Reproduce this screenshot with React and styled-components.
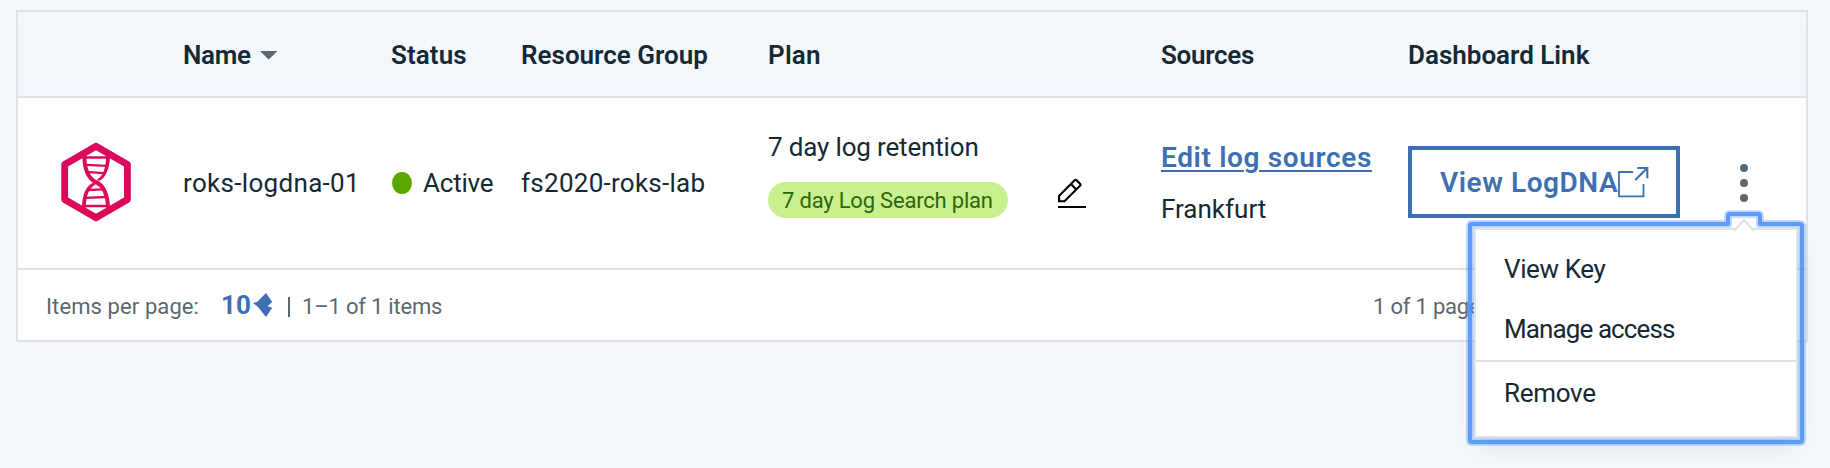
import React from "react";
import styled, { createGlobalStyle } from "styled-components";

const ink = "#152935";
const muted = "#5a6872";
const line = "#dfe3e6";
const blue = "#3d70b2";

const GlobalStyle = createGlobalStyle`
  * { box-sizing: border-box; }
  body {
    margin: 0;
    background: #f4f7fb;
    color: ${ink};
    font-family: Roboto, "Liberation Sans", sans-serif;
    font-size: 26px;
    line-height: 34px;
  }
`;

const Page = styled.main`
  height: 468px;
  padding: 10px 22px 0 16px;
  overflow: hidden;
`;

const Card = styled.section`
  border: 2px solid ${line};
  background: #fff;
`;

const Columns = styled.div`
  display: grid;
  grid-template-columns: 165px 208px 130px 247px 393px 247px 1fr;
  align-items: center;
`;

const HeaderRow = styled(Columns)`
  height: 86px;
  padding-top: 2px;
  background: linear-gradient(#f4f8fb, #f3f6fc);
  border-bottom: 2px solid ${line};
`;

const HeaderCell = styled.div`
  grid-column: ${(p) => p.$col};
  display: flex;
  align-items: center;
  gap: 9px;
  font-weight: 600;
  white-space: nowrap;
`;

const Label = styled.span`
  white-space: nowrap;
  letter-spacing: ${(p) => p.$track || 0}px;
`;

const ServiceRow = styled(Columns)`
  height: 172px;
  border-bottom: 2px solid ${line};
`;

const LogoCell = styled.div`
  padding-left: 42px;
  height: 80px;
  margin-top: -2px;
`;

const StatusCell = styled.div`
  display: flex;
  align-items: center;
  gap: 11px;
`;

const StatusDot = styled.span`
  width: 20px;
  height: 22px;
  margin-left: 1px;
  border-radius: 50%;
  background: #5aa700;
`;

const PlanCell = styled.div`
  display: flex;
  align-items: center;
  gap: 50px;
  align-self: start;
  padding-top: 32px;
`;

const PlanInfo = styled.div`
  width: 240px;
  display: flex;
  flex-direction: column;
  gap: 18px;
`;

const Tag = styled.span`
  height: 36px;
  padding: 1px 14px 0;
  border-radius: 18px;
  background: #c8f08f;
  color: #2d660a;
  font-size: 22px;
  line-height: 36px;
`;

const EditButton = styled.button`
  display: block;
  height: 30px;
  margin-top: 37px;
  padding: 0;
  border: 0;
  background: none;
`;

const SourcesCell = styled.div`
  display: flex;
  flex-direction: column;
  align-items: flex-start;
  gap: 17px;
`;

const SourcesLink = styled.a`
  color: ${blue};
  font-size: 28px;
  font-weight: 600;
  letter-spacing: 0.65px;
  white-space: nowrap;
  text-decoration: underline;
  text-decoration-thickness: 2px;
  text-underline-offset: 3px;
`;

const DashboardCell = styled.div`
  display: flex;
  align-items: center;
  gap: 60px;
`;

const DashboardButton = styled.button`
  display: flex;
  align-items: center;
  width: 272px;
  height: 72px;
  margin-top: -2px;
  padding: 1px 0 0 28px;
  border: 4px solid ${blue};
  background: #fff;
  color: ${blue};
  font: 600 28px/34px Roboto, sans-serif;
`;

const Actions = styled.div`
  position: relative;
  height: 40px;
`;

const MenuLayer = styled.div`
  position: absolute;
  z-index: 2;
  top: 65px;
  left: -266px;
  width: 324px;
`;

const Menu = styled.ul`
  list-style: none;
  margin: 0;
  height: 210px;
  padding: 10px 0 0;
  border: 2px solid ${line};
  background: #fff;
  box-shadow: 0 8px 24px rgba(0, 0, 0, 0.08);
`;

const MenuItem = styled.li`
  height: ${(p) => (p.$divided ? 64 : 60)}px;
  padding: ${(p) => (p.$divided ? 14 : 12)}px 28px 0;
  border-top: ${(p) => (p.$divided ? `2px solid ${line}` : "0")};
`;

const FocusRing = styled.svg`
  position: absolute;
  left: -14px;
  top: -24px;
  pointer-events: none;
`;

const Footer = styled.footer`
  display: flex;
  align-items: center;
  height: 70px;
  padding: 3px 0 0 28px;
  color: ${muted};
  font-size: 22px;
`;

const PageSize = styled.span`
  display: flex;
  align-items: center;
  gap: 2px;
  width: 67px;
  margin: -3px 0 0 22px;
  color: ${blue};
  font-size: 26px;
  font-weight: 700;
`;

const Separator = styled.span`
  width: 2px;
  height: 20px;
  margin-right: 12px;
  background: ${muted};
`;

const PageCount = styled.span`
  margin-left: auto;
  width: 433px;
  letter-spacing: -0.2px;
`;

const Logo = () => (
  <svg width="72" height="80" viewBox="60 142 72 80" fill="none" stroke="#dc0a5a">
    <path d="M96 146.2 127.4 164.5V199.5L96 217.8 64.7 199.5V164.5Z" strokeWidth="6.8" strokeLinejoin="round" />
    <path d="M84.3 156C84.5 168 88 178 95.5 182C104 185 107.8 196 108 208" strokeWidth="4" />
    <path d="M106.2 156H110C110 167 106 178 99 181L97 179.6C103.5 176 106 167 106.2 156ZM82 208C82 195 86 186 93.5 182.6L95.5 184.4C89 188 86 195 85.8 208Z" fill="#dc0a5a" stroke="none" />
    <path d="M86 157.5H107M86.5 164.8 106.5 165.8M89 172.2 104 173.2M88 190 103 189.4M86 197.8 106 197M85 206H107" strokeWidth="2.3" />
  </svg>
);

const SortCaret = () => (
  <svg width="18" height="9" viewBox="0 0 18 9"><path d="M0 0H17.5L8.7 8.5Z" fill={muted} /></svg>
);

const Pencil = () => (
  <svg width="28" height="30" viewBox="0 0 28 30">
    <path d="M0 28H28V30H0Z" />
    <path transform="translate(-4.3 -1.45) scale(1.075)" d="M25.4 9c.8-.8.8-2 0-2.8l-3.6-3.6c-.8-.8-2-.8-2.8 0l-15 15V24h6.4L25.4 9zM20.4 4 24 7.6l-3 3L17.4 7l3-3zM6 22v-3.6l10-10 3.6 3.6-10 10H6z" />
  </svg>
);

const Launch = () => (
  <svg width="31" height="31" viewBox="0 0 31 31" fill="none" stroke={blue} strokeWidth="1.8">
    <path d="M15 5H1V29.3H25.5V17" />
    <path d="M19.3 1H29.3V11.3M29 1.3 17.3 13" strokeWidth="2.1" />
  </svg>
);

const Arrows = () => (
  <svg width="20" height="24" viewBox="0 0 20 24">
    <path d="M0 10 4 9 13 0 19.2 9 14.5 13.2 19.2 14.8 13 24 5 14Z" fill={blue} />
  </svg>
);

const Kebab = () => (
  <svg width="8" height="40" viewBox="0 0 8 40" fill={muted}>
    <circle cx="4" cy="5" r="4" /><circle cx="4" cy="20" r="4" /><circle cx="4" cy="35" r="4" />
  </svg>
);

const ringPath =
  "M1728 224V216Q1728 214 1730 214H1758Q1760 214 1760 216V224H1800Q1802 224 1802 226V440Q1802 442 1800 442H1472Q1470 442 1470 440V226Q1470 224 1472 224Z";

const Ring = () => (
  <FocusRing width="354" height="248" viewBox="1460 204 354 248" fill="none">
    <path d="M1731 228V217H1757V228Z" fill="#fcfcfd" />
    <path d="M1734.5 230.5 1744 220 1753.5 230.5" fill="#fff" stroke={line} strokeWidth="2" />
    <path d={ringPath} stroke="#5596f8" strokeOpacity=".4" strokeWidth="7.6" strokeLinejoin="round" />
    <path d={ringPath} stroke="#4a90f8" strokeOpacity=".82" strokeWidth="4" strokeLinejoin="round" />
  </FocusRing>
);

export default function App() {
  return (
    <Page>
      <GlobalStyle />
      <Card>
        <HeaderRow>
          <HeaderCell $col={2}><Label $track={-0.3}>Name</Label><SortCaret /></HeaderCell>
          <HeaderCell $col={3}><Label $track={0.1}>Status</Label></HeaderCell>
          <HeaderCell $col={4}><Label>Resource Group</Label></HeaderCell>
          <HeaderCell $col={5}><Label $track={0.2}>Plan</Label></HeaderCell>
          <HeaderCell $col={6}><Label $track={-0.3}>Sources</Label></HeaderCell>
          <HeaderCell $col={7}><Label>Dashboard Link</Label></HeaderCell>
        </HeaderRow>
        <ServiceRow>
          <LogoCell><Logo /></LogoCell>
          <Label $track={0.32}>roks-logdna-01</Label>
          <StatusCell><StatusDot /><Label $track={-0.2}>Active</Label></StatusCell>
          <Label $track={0.27}>fs2020-roks-lab</Label>
          <PlanCell>
            <PlanInfo>
              <Label $track={-0.16}>7 day log retention</Label>
              <Tag><Label $track={-0.2}>7 day Log Search plan</Label></Tag>
            </PlanInfo>
            <EditButton aria-label="Edit plan"><Pencil /></EditButton>
          </PlanCell>
          <SourcesCell>
            <SourcesLink>Edit log sources</SourcesLink>
            <Label>Frankfurt</Label>
          </SourcesCell>
          <DashboardCell>
            <DashboardButton><Label $track={0.56}>View LogDNA</Label><Launch /></DashboardButton>
            <Actions>
              <Kebab />
              <MenuLayer>
                <Menu>
                  <MenuItem><Label $track={-0.39}>View Key</Label></MenuItem>
                  <MenuItem><Label $track={-0.9}>Manage access</Label></MenuItem>
                  <MenuItem $divided><Label $track={-0.3}>Remove</Label></MenuItem>
                </Menu>
                <Ring />
              </MenuLayer>
            </Actions>
          </DashboardCell>
        </ServiceRow>
        <Footer>
          <Label $track={0.1}>Items per page:</Label>
          <PageSize><Label>10</Label><Arrows /></PageSize>
          <Separator />
          <Label $track={-0.2}>1–1 of 1 items</Label>
          <PageCount>1 of 1 pages</PageCount>
        </Footer>
      </Card>
    </Page>
  );
}
